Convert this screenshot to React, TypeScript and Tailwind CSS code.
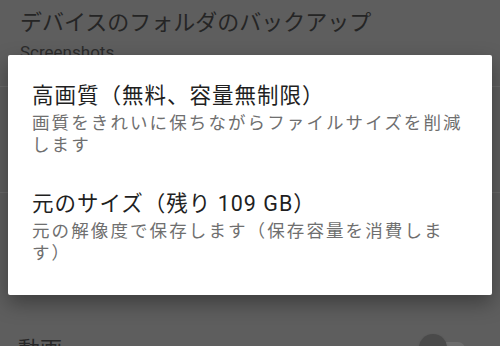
const font = 'font-["Roboto","Noto_Sans_CJK_JP",sans-serif]';

const options = [
  {
    title: '高画質（無料、容量無制限）',
    body: '画質をきれいに保ちながらファイルサイズを削減します',
  },
  {
    title: '元のサイズ（残り 109 GB）',
    body: '元の解像度で保存します（保存容量を消費します）',
  },
];

const App = () => {
  return (
    <div className={`relative w-[500px] h-[346px] overflow-hidden bg-[#5e5e5e] [text-spacing-trim:space-all] ${font}`}>
      {/* settings page behind the dim */}
      <div className="flex flex-col">
        <div className="h-[86px] px-[20px] pt-[7px]">
          <div className="text-[22px] leading-[32px] text-[#252525]">デバイスのフォルダのバックアップ</div>
          <div className="text-[17px] leading-[26px] text-[#2c2c2c]">Screenshots</div>
        </div>
        <div className="h-px bg-[#6a6a6a]" />
        <div className="h-[105px]" />
        <div className="h-px bg-[#6a6a6a]" />
        <div className="h-[140px]" />
        <div className="flex items-start justify-between pl-[18px] pr-[35px] pt-[2px]">
          <div className="text-[22px] leading-[30px] text-[#262626]">動画</div>
          <div className="relative w-[46px] h-[28px] mt-[-1px]">
            <div className="absolute left-[8px] top-[8px] w-[38px] h-[14px] rounded-full bg-[#6c6c6c]" />
            <div className="absolute left-0 top-0 w-[28px] h-[28px] rounded-full bg-[#4a4a4a] shadow" />
          </div>
        </div>
      </div>

      {/* dialog */}
      <div className="absolute left-[8px] top-[55px] w-[484px] h-[240px] bg-white rounded-[2px] shadow-[0_8px_20px_rgba(0,0,0,0.35)] px-[24px] pt-[26px]">
        <div className="flex flex-col gap-[33px]">
          {options.map(option => (
            <div key={option.title}>
              <div className="text-[21.5px] leading-[30px] tracking-[1px] text-[#1f1f1f]">{option.title}</div>
              <div className="mt-[1px] text-[17.5px] leading-[22px] tracking-[2.1px] text-[#6f6f6f]">{option.body}</div>
            </div>
          ))}
        </div>
      </div>
    </div>
  );
};

export default App;
